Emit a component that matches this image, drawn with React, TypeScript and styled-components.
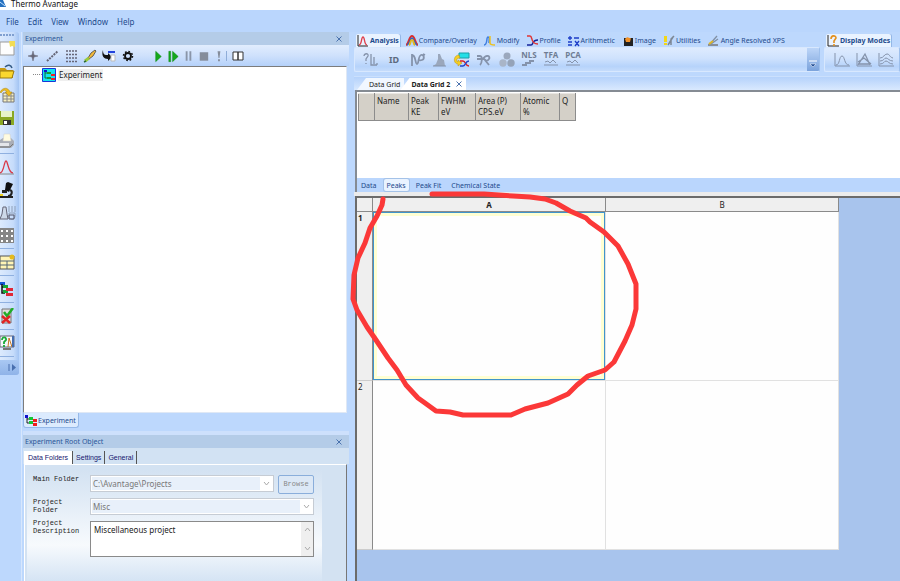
import React from "react";
import styled, { createGlobalStyle, css } from "styled-components";

const Global = createGlobalStyle`
  * { box-sizing: border-box; }
  body { margin: 0; background: #bdd8fd; overflow: hidden; }
  body, button, input, select, textarea { font-family: "Noto Sans", "Open Sans", sans-serif; font-size: 8px; line-height: 11px; color: #222; }
  button { background: none; border: 0; padding: 0; margin: 0; }
`;

const navy = "#1d4a8c";

const Shell = styled.div`
  height: 100vh;
  display: flex;
  flex-direction: column;
  background: #bdd8fd;
`;
const TitleBar = styled.header`
  flex: none;
  height: 10px;
  background: #fff;
  display: flex;
  align-items: flex-start;
  gap: 4px;
  svg { display: block; }
`;
const Title = styled.span`
  line-height: 8px;
  color: #111;
`;
const MenuBar = styled.nav`
  flex: none;
  height: 22px;
  display: flex;
  align-items: center;
  gap: 9px;
  padding-left: 6px;
  background: #bad6fd;
`;
const MenuItem = styled.button`
  font-size: 8px;
  color: ${navy};
`;
const Body = styled.div`
  flex: 1;
  min-height: 0;
  display: flex;
`;

const SideBar = styled.aside`
  flex: none;
  align-self: flex-start;
  width: 19px;
  display: flex;
  flex-direction: column;
  align-items: flex-start;
  background: linear-gradient(90deg, #dceafd, #c6dcfb 70%, #a3c4f3);
  border-radius: 0 3px 3px 0;
  overflow: hidden;
`;
const Grip = styled.div`
  width: 14px;
  height: 2px;
  margin: 2px 0 1px;
  background: repeating-linear-gradient(90deg, #7f9fd0 0 2px, transparent 2px 3px);
`;
const SideButton = styled.button<{ $tall?: boolean }>`
  width: 16px;
  height: ${(p) => (p.$tall ? 24 : 23)}px;
  display: flex;
  align-items: center;
`;
const SideRule = styled.div`
  width: 14px;
  height: 1px;
  margin: 1px 0;
  background: #8fb0e0;
`;
const Expander = styled.button`
  width: 19px;
  height: 15px;
  margin-top: 2px;
  display: flex;
  align-items: center;
  justify-content: flex-end;
  padding-right: 2px;
  background: linear-gradient(#a9c8f3, #8fb3e8);
`;

const Dock = styled.section`
  flex: none;
  width: 328px;
  margin-left: 2px;
  padding-left: 1px;
  border-left: 1px solid #d7e7fd;
  display: flex;
  flex-direction: column;
  min-height: 0;
`;
const DockHeader = styled.div`
  flex: none;
  height: 13px;
  display: flex;
  align-items: center;
  justify-content: space-between;
  padding: 0 6px 0 2px;
  font-size: 7px;
  color: #2a5699;
  background: #b4cce8;
`;
const CloseButton = styled.button`
  width: 8px;
  height: 8px;
  display: flex;
  align-items: center;
  justify-content: center;
`;
const DockTools = styled.div`
  flex: none;
  height: 21px;
  display: flex;
  align-items: center;
  background: linear-gradient(#e1edfe, #cfe1fc 50%, #b5d1fa);
`;
const ToolButton = styled.button<{ $w?: number }>`
  width: ${(p) => p.$w ?? 19}px;
  height: 18px;
  display: flex;
  align-items: center;
  justify-content: center;
`;
const ToolGap = styled.div`
  width: 14px;
`;
const ToolRule = styled.div`
  width: 1px;
  height: 10px;
  margin: 0 1px 0 0;
  background: #8fadd8;
`;
const Tree = styled.div`
  flex: none;
  height: 347px;
  margin-right: 2px;
  border: 1px solid #7c7c7c;
  border-right-color: #dfe8f5;
  border-bottom-color: #dfe8f5;
  background: #fff;
`;
const TreeItem = styled.div`
  display: flex;
  align-items: center;
  height: 15px;
  padding-left: 9px;
  &::before { content: ""; width: 9px; border-top: 1px dotted #888; }
  svg { display: block; }
`;
const TreeLabel = styled.span`
  margin-left: 2px;
  padding: 0 1px;
  line-height: 12px;
  background: #efefef;
`;
const DockTabs = styled.div`
  flex: none;
  height: 22px;
  border-bottom: 4px solid #cde0fc;
`;
const DockTab = styled.button`
  height: 15px;
  display: flex;
  align-items: center;
  gap: 1px;
  padding: 0 2px 0 1px;
  font-size: 7px;
  background: #dcebfe;
  border: 1px solid #96b9e8;
  border-top: 0;
  border-radius: 0 0 3px 3px;
  color: ${navy};
`;
const PropTabs = styled.div`
  flex: none;
  display: flex;
  align-items: flex-end;
  height: 16px;
  padding-left: 1px;
  background: #d2e2f3;
`;
const PropTab = styled.button<{ $active?: boolean }>`
  height: 13px;
  padding: 0 3px;
  font-family: "Liberation Sans", Arial, sans-serif;
  font-size: 7px;
  color: #16166e;
  border-right: 1px solid #555;
  ${(p) => p.$active && css`background: #fff; padding: 0 4px;`}
`;
const PropPanel = styled.div`
  flex: 1;
  margin: 0 2px 0 1px;
  padding: 5px 24px 0 2px;
  border-right: 1px solid #777;
  border-left: 1px solid #fff;
  border-top: 1px solid #fff;
  background: #d3e2f2;
`;
const Form = styled.div`
  height: 100%;
  padding: 5px 8px 0 6px;
  display: grid;
  grid-template-columns: 57px 1fr;
  grid-auto-rows: min-content;
  row-gap: 4px;
  background: linear-gradient(#d3e2f2, #f7fafd 75px, #d5e4f4);
`;
const FormLabel = styled.label`
  font-family: "Liberation Mono", monospace;
  font-size: 7px;
  line-height: 8px;
  color: #222;
`;
const FieldLine = styled.div`
  display: flex;
  gap: 4px;
`;
const SelectBox = styled.div`
  position: relative;
  flex: 1;
  height: 17px;
  border: 1px solid #c6ccd4;
  background: #fff;
  padding: 1px;
  svg { position: absolute; right: 3px; top: 5px; pointer-events: none; }
`;
const Select = styled.select`
  appearance: none;
  display: block;
  width: calc(100% - 12px);
  height: 13px;
  border: 0;
  padding: 0 1px;
  background: #e8f0fa;
  color: #777;
  opacity: 1;
`;
const Browse = styled.button`
  width: 36px;
  height: 19px;
  border: 1px solid #8aaedb;
  border-radius: 2px;
  font-family: "Liberation Mono", monospace;
  font-size: 7px;
  color: #888;
  background: #dce8f6;
`;
const MemoBox = styled.div`
  display: flex;
  height: 36px;
  margin-top: 2px;
  border: 1px solid #8a8a8a;
  background: #fff;
`;
const Memo = styled.textarea`
  flex: 1;
  min-width: 0;
  border: 0;
  resize: none;
  padding: 2px 3px;
  overflow: hidden;
  background: transparent;
`;
const MemoScroll = styled.div`
  width: 12px;
  display: flex;
  flex-direction: column;
  justify-content: space-between;
  align-items: center;
  padding: 5px 0;
  background: #efefef;
`;

const Main = styled.main`
  flex: 1;
  min-width: 0;
  margin-left: 5px;
  display: flex;
  flex-direction: column;
`;
const Ribbon = styled.div`
  flex: none;
  display: flex;
  gap: 4px;
  padding-top: 2px;
`;
const RibbonGroup = styled.div<{ $fixed?: boolean }>`
  ${(p) => (p.$fixed ? css`flex: none; width: 76px;` : css`flex: 1; min-width: 0;`)}
`;
const RibbonTabs = styled.div`
  height: 13px;
  display: flex;
  gap: 5px;
  padding-left: 2px;
`;
const RibbonTab = styled.button<{ $active?: boolean }>`
  flex: none;
  height: 13px;
  display: flex;
  align-items: center;
  gap: 1px;
  padding: 0 1px;
  font-size: 7px;
  color: ${navy};
  white-space: nowrap;
  ${(p) => p.$active && css`
    font-weight: bold;
    background: #eaf3ff;
    border-radius: 2px 2px 0 0;
    box-shadow: 1px 0 0 #94b7e6;
  `}
`;
const RibbonTools = styled.div`
  height: 25px;
  display: flex;
  align-items: center;
  padding-left: 5px;
  border: 1px solid #d8e8fe;
  border-right-color: #9dbfec;
  border-radius: 2px;
  background: linear-gradient(#deebfe, #cfe2fd 45%, #b6d3fb 80%, #c5dcfc);
  overflow: hidden;
`;
const ToolText = styled.span`
  font-size: 8px;
  line-height: 9px;
  font-weight: bold;
  color: #6f7d94;
`;
const ToolStack = styled.button`
  width: 22px;
  height: 20px;
  display: flex;
  flex-direction: column;
  align-items: center;
`;
const IdText = styled.span`
  font-size: 9px;
  font-weight: bold;
  color: #5d6a80;
`;
const Overflow = styled.button`
  width: 12px;
  align-self: stretch;
  margin-left: auto;
  display: flex;
  justify-content: center;
  align-items: flex-end;
  padding-bottom: 3px;
  background: linear-gradient(#bcd5f8, #7ba3dc);
`;
const DocTabs = styled.div`
  flex: none;
  height: 14px;
  margin-top: 4px;
  display: flex;
  align-items: flex-end;
  padding-left: 3px;
  background: linear-gradient(#b5d2fb, #d9e9fe);
  border-top: 1px solid #cbe0fd;
`;
const DocTab = styled.button<{ $active?: boolean }>`
  height: 12px;
  display: flex;
  align-items: center;
  gap: 5px;
  font-size: 7px;
  padding: 0 4px 0 12px;
  color: #222;
  background: #f1f7ff;
  clip-path: polygon(9px 0, 100% 0, 100% 100%, 0 100%);
  ${(p) => p.$active && css`
    margin-left: -4px;
    padding: 0 3px 0 11px;
    font-weight: bold;
    background: #fff;
  `}
`;
const GridPane = styled.div`
  flex: none;
  margin-left: 1px;
  height: 102px;
  display: flex;
  flex-direction: column;
  border-left: 2px solid #858b93;
  border-top: 2px solid #858b93;
  background: #fff;
`;
const GridScroll = styled.div`
  flex: 1;
  padding: 1px 0 0 1px;
`;
const PeakTable = styled.table`
  border-collapse: collapse;
  table-layout: fixed;
  width: 217px;
  background: #d4d0c8;
  th {
    height: 27px;
    padding: 1px 0 0 2px;
    border: 1px solid #8c8c8c;
    border-top-color: #e8e6e2;
    font-weight: normal;
    text-align: left;
    vertical-align: top;
    white-space: pre-line;
  }
`;
const SheetTabs = styled.div`
  flex: none;
  height: 14px;
  display: flex;
  align-items: center;
  gap: 4px;
  padding-left: 1px;
  background: #bad6fd;
`;
const SheetTab = styled.button<{ $active?: boolean }>`
  height: 12px;
  padding: 0 3px;
  font-size: 7px;
  color: ${navy};
  ${(p) => p.$active && css`
    background: #eaf3ff;
    box-shadow: 0 0 0 1px #a4c2e8;
    border-radius: 2px;
  `}
`;
const DisplayPane = styled.div`
  position: relative;
  flex: 1;
  min-height: 0;
  margin-left: 1px;
  padding-right: 61px;
  border-left: 2px solid #6b6b6b;
  border-top: 2px solid #6b6b6b;
  background: #a8c4ed;
`;
const PaneGap = styled.div`
  flex: none;
  height: 4px;
  background: #ececec;
`;
const DisplayTable = styled.table`
  width: 100%;
  table-layout: fixed;
  border-collapse: separate;
  border-spacing: 0;
  background: #fefefe;
  th {
    background: #efefef;
    border-right: 1px solid #8a8a8a;
    border-bottom: 1px solid #8a8a8a;
    font-weight: normal;
    padding: 0;
    vertical-align: top;
  }
  thead th { height: 14px; line-height: 13px; }
  tbody th { height: 169px; text-align: left; padding-left: 1px; border-bottom-color: #ccc; }
  td { border-right: 1px solid #e1e1e1; border-bottom: 1px solid #e1e1e1; padding: 0; }
  td.selected { box-shadow: inset 0 0 0 1px #3f94cc, inset 0 0 0 4px #ffffd2; }
  th.current { font-weight: bold; }
`;
const Scribble = styled.svg`
  position: absolute;
  left: -7px;
  top: -8px;
  pointer-events: none;
`;

type G = { w?: number; h?: number; children: React.ReactNode };
const Icon = ({ w = 16, h = 16, children }: G) => (
  <svg width={w} height={h} viewBox={`0 0 ${w} ${h}`} fill="none" aria-hidden="true">{children}</svg>
);
const Cross = () => (
  <Icon w={6} h={6}><path d="M.5 .5l5 5M5.500 .5l-5 5" stroke="#4a72ae" /></Icon>
);
const Chevron = ({ up }: { up?: boolean }) => (
  <Icon w={7} h={5}><path d={up ? "M1 4l2.500-3L6 4" : "M1 1l2.500 3L6 1"} stroke="#aaa" /></Icon>
);
const TreeIcon = () => (
  <Icon w={12} h={11}>
    <path d="M2 2v6h3M2 4h4" stroke="#222" />
    <path d="M0 0h3v3H0z" fill="#11c" />
    <path d="M4 2h4v3H4zM4 6h4v3H4z" fill="#15c735" />
    <path d="M8 4h4v3H8zM8 8h4v3H8z" fill="#ee1c1c" />
  </Icon>
);

const sideTop: [string, React.ReactNode][] = [
  ["New", <><path d="M0 1h14v13H0z" fill="#fdfdfd" stroke="#999" /><path d="M9 0h6v6l-3-1-2 1z" fill="#f2dc55" /></>],
  ["Open", <><path d="M0 4h5l2 2h6v8H0z" fill="#c79a12" /><path d="M0 14V7h14l-2 7z" fill="#fbd72e" stroke="#9a7a10" /><path d="M5 3c3-3 6-2 7 1" stroke="#345b86" strokeWidth="1.500" /></>],
  ["Copy", <><path d="M3 6h11v9H3z" fill="#f7efc0" stroke="#777" /><path d="M3 9h11M3 12h11M7 6v9M11 6v9" stroke="#888" /><path d="M0 5c3-5 8-5 10 0l2 0-3 4-4-4h2C5 2 3 3 1 6z" fill="#eebc20" stroke="#a98412" strokeWidth=".5" /></>],
  ["Save", <><path d="M0 1h14v14H0z" fill="#8aa823" /><path d="M1 1h11v6H1z" fill="#e7f3c8" /><path d="M3 10h8v5H3z" fill="#333" /><path d="M4 11h3v3H4z" fill="#fff" /></>],
  ["Print", <><path d="M0 7l3-2h8l3 3v4l-3 3H0z" fill="#a9adb6" /><path d="M4 1h6l1 7H3z" fill="#fffbe0" stroke="#ccc" strokeWidth=".5" /><path d="M0 10h9v3H0z" fill="#e4e6ea" /><path d="M0 14h10l3-3" stroke="#777" /></>],
];
const sideMid: [string, React.ReactNode][] = [
  ["Peak", <><path d="M0 14c4 0 4-12 6-12s2 12 7 12" stroke="#d93a4a" strokeWidth="1.300" /><path d="M0 15h14" stroke="#888" /></>],
  ["Microscope", <><path d="M6 1l2-1 5 2-4 8-4-2z" fill="#111" /><path d="M10 8c3 1 2 6-2 6" stroke="#222" strokeWidth="2" /><path d="M0 14h13v2H0z" fill="#222" /><path d="M0 12h3v2H0z" fill="#eed21d" /><path d="M2 8h5v3H2z" fill="#222" /></>],
  ["Sample", <><path d="M0 14l2-5 1-7h3l1 7 1 5z" fill="#cdd8e8" stroke="#667" /><path d="M9 8h6v4c-2 3-4 3-6 0zM9 1v6M12 1v6M15 1v6" stroke="#8fa0b8" /><path d="M9 10h5v4H9z" stroke="#556" /></>],
  ["Array", <><path d="M0 0h14v15H0z" fill="#858585" /><path d="M1 3h12M1 8h12M1 13h12" stroke="#fff" strokeWidth="2" strokeDasharray="2 3" /></>],
];
const sideLow: [string, React.ReactNode][] = [
  ["Table", <><path d="M0 2h14v13H0z" fill="#fff4b5" stroke="#555" /><path d="M0 7h14M0 11h14M7 7v8" stroke="#567" /><circle cx="12" cy="3" r="2.500" fill="#e5ba1c" /></>],
  ["Tree", <><path d="M0 1h5v3H0z" fill="#1557d5" /><path d="M2 3v9h3M2 6h3" stroke="#111" strokeWidth="1.500" /><path d="M3 4h5v3H3zM3 9h5v3H3z" fill="#16a834" /><path d="M6 7h7v3H6zM6 12h7v3H6z" fill="#e02736" /></>],
  ["Validate", <><path d="M2 1h9v14H2z" fill="#ddd" stroke="#777" /><path d="M4 4l3 4 6-8" stroke="#20ad26" strokeWidth="2.500" /><path d="M2 8l8 7M10 8l-8 7" stroke="#df2424" strokeWidth="2.500" /></>],
  ["Query", <><path d="M0 1h14v11H0z" fill="#f4f7fb" stroke="#667" /><path d="M2 5c0-4 5-3 4 0L4 7v2M4 10v2" stroke="#18aa38" strokeWidth="1.800" /><path d="M8 12l1-9 3 9" stroke="#c57822" /><path d="M13 1v11" stroke="#446db0" strokeWidth="2" /><path d="M3 14h8" stroke="#777" strokeWidth="2" /></>],
];

const g = "#8593ab";
const pointTools: [string, React.ReactNode][] = [
  ["Point", <path d="M8 3l1 4 4 1-4 1-1 4-1-4-4-1 4-1z" fill="#667" stroke="#667" strokeWidth=".5" />],
  ["Line", <path d="M3 13L14 3" stroke="#667" strokeWidth="2" strokeDasharray="2 1" />],
  ["Grid", <path d="M3 3h11M3 6.500h11M3 10h11M3 13.500h11" stroke="#667" strokeWidth="1.500" strokeDasharray="2 1" />],
  ["Probe", <><path d="M6 10l3-5 4-3 1 1-3 5-4 3z" fill="#f3b93a" stroke="#444" strokeWidth=".8" /><path d="M3 13l4-3" stroke="#9aca3a" strokeWidth="3" /><path d="M2 14l2-1" stroke="#2c6a3a" strokeWidth="1.500" /></>],
  ["Connect", <><path d="M2 2c0 5 2 5 5 5l0-2 4 4-4 4v-2C3 11 0 8 2 2z" fill="#111" /><path d="M7 4h7" stroke="#2443dd" strokeWidth="2" /><path d="M10 7h4v6h-4z" fill="#fff" stroke="#bbb" /></>],
  ["Settings", <><circle cx="8" cy="8" r="3" stroke="#111" strokeWidth="1.800" /><circle cx="8" cy="8" r="4.500" stroke="#111" strokeWidth="1.500" strokeDasharray="1.700 1.800" /></>],
];
const runTools: [string, React.ReactNode][] = [
  ["Play", <path d="M5 3l6 5.500-6 5.500z" fill="#14a81b" stroke="#0c8513" strokeWidth=".5" />],
  ["Step", <path d="M3 3h2v11H3zM7 3l6 5.500L7 14z" fill="#14a81b" stroke="#0c8513" strokeWidth=".5" />],
  ["Pause", <path d="M5 3h2v10H5zM9 3h2v10H9z" fill="#8a95a8" />],
  ["Stop", <path d="M4 4h9v9H4z" fill="#858d9b" />],
  ["Alert", <path d="M7 3h3l-1 7H8zM7.500 11.500h2v2h-2z" fill="#858d9b" />],
];

const ribbonTabs: [string, React.ReactNode][] = [
  ["Analysis", <><path d="M1 0v11h10" stroke="#222" /><path d="M2 10c3 0 2-8 4-8s1 8 4 8" stroke="#df3e4a" strokeWidth="1.300" /></>],
  ["Compare/Overlay", <><path d="M0 10C3 9 3 1 6 1s3 8 6 9" stroke="#d82f2f" strokeWidth="2" /><path d="M1 10C4 9 4 3 6 3s2 6 5 7" stroke="#2864c8" strokeWidth="1.500" /><path d="M3 10c2-1 1-5 3-5s1 4 3 5" stroke="#e2b81c" strokeWidth="2" /></>],
  ["Modify", <><path d="M0 10C4 10 2 2 4 2s1 3 1 6" stroke="#3f7fe0" strokeWidth="1.500" /><path d="M6 1v7c0 2 3 2 5 2" stroke="#ecc11f" strokeWidth="1.500" /></>],
  ["Profile", <><path d="M1 10h4c3 0 0-5 7-5" stroke="#16239a" strokeWidth="1.500" /><path d="M1 1h3c3 0 0 8 8 8" stroke="#df3434" strokeWidth="1.500" /></>],
  ["Arithmetic", <path d="M0 3h4M2 1v4M6 3h5M0 7h4M0 10h4M7 6l4 5M11 6l-4 5" stroke="#1c3cc7" strokeWidth="1.300" />],
  ["Image", <><path d="M2 3h9v8H2z" fill="#222" /><path d="M3 4c3-4 4 0 6-1l-1 4H4z" fill="#f09028" /></>],
  ["Utilities", <><path d="M1 1h3v6H1zM1 8h3v2H1z" fill="#f2d718" /><path d="M5 10l5-8M8 10V4l3-3" stroke="#7d8794" strokeWidth="1.500" /></>],
  ["Angle Resolved XPS", <><path d="M0 10h10" stroke="#777" strokeWidth="1.500" /><path d="M2 9L9 1M3 9l7-5" stroke="#8190a4" strokeWidth="1.300" /><path d="M1 9l4-3" stroke="#ddb62b" strokeWidth="2" /></>],
];

export default function App() {
  return (
    <>
      <Global />
      <Shell>
        <TitleBar>
          <Icon w={7} h={8}><path d="M0 0h3l3 7H0z" fill="#2570bf" /><path d="M0 2l5 4" stroke="#bfe1ff" /></Icon>
          <Title>Thermo Avantage</Title>
        </TitleBar>
        <MenuBar>
          {["File", "Edit", "View", "Window", "Help"].map((m) => <MenuItem key={m}>{m}</MenuItem>)}
        </MenuBar>
        <Body>
          <SideBar>
            <Grip />
            {sideTop.map(([n, i]) => <SideButton key={n} aria-label={n}><Icon>{i}</Icon></SideButton>)}
            <SideRule />
            {sideMid.map(([n, i]) => <SideButton key={n} aria-label={n}><Icon>{i}</Icon></SideButton>)}
            {sideLow.map(([n, i]) => (
              <React.Fragment key={n}>
                <SideRule />
                <SideButton $tall aria-label={n}><Icon>{i}</Icon></SideButton>
              </React.Fragment>
            ))}
            <SideRule />
            <Expander aria-label="More tools"><Icon w={9} h={9}><path d="M1 1v7" stroke="#486fae" /><path d="M4 1l4 3.500L4 8z" fill="#486fae" /></Icon></Expander>
          </SideBar>

          <Dock>
            <DockHeader>Experiment<CloseButton aria-label="Close experiment"><Cross /></CloseButton></DockHeader>
            <DockTools>
              {pointTools.map(([n, i]) => <ToolButton key={n} aria-label={n}><Icon>{i}</Icon></ToolButton>)}
              <ToolGap />
              {runTools.map(([n, i]) => <ToolButton key={n} $w={15} aria-label={n}><Icon>{i}</Icon></ToolButton>)}
              <ToolRule />
              <ToolButton aria-label="Log"><Icon><path d="M3 4h5v8H3zM8 4h5v8H8z" fill="#fff" stroke="#333" /></Icon></ToolButton>
            </DockTools>
            <Tree>
              <TreeItem>
                <Icon w={14} h={14}><path d="M.5 .5h13v13H.5z" fill="#14e4ee" stroke="#1a35d8" /><path d="M3 3v7h4M3 5h5" stroke="#164" /><path d="M2 2h3v2H2z" fill="#11c" /><path d="M5 4h4v2H5zM5 9h4v2H5z" fill="#159b34" /><path d="M9 6h4v2H9zM9 10h4v2H9z" fill="#e22" /></Icon>
                <TreeLabel>Experiment</TreeLabel>
              </TreeItem>
            </Tree>
            <DockTabs><DockTab><TreeIcon />Experiment</DockTab></DockTabs>
            <DockHeader>Experiment Root Object<CloseButton aria-label="Close properties"><Cross /></CloseButton></DockHeader>
            <PropTabs>
              <PropTab $active>Data Folders</PropTab>
              <PropTab>Settings</PropTab>
              <PropTab>General</PropTab>
            </PropTabs>
            <PropPanel>
              <Form>
                <FormLabel htmlFor="main">Main Folder</FormLabel>
                <FieldLine>
                  <SelectBox><Select id="main" disabled><option>C:\Avantage\Projects</option></Select><Chevron /></SelectBox>
                  <Browse disabled>Browse</Browse>
                </FieldLine>
                <FormLabel htmlFor="folder">Project<br />Folder</FormLabel>
                <SelectBox><Select id="folder" disabled><option>Misc</option></Select><Chevron /></SelectBox>
                <FormLabel htmlFor="desc">Project<br />Description</FormLabel>
                <MemoBox>
                  <Memo id="desc" defaultValue="Miscellaneous project" />
                  <MemoScroll><Chevron up /><Chevron /></MemoScroll>
                </MemoBox>
              </Form>
            </PropPanel>
          </Dock>

          <Main>
            <Ribbon>
              <RibbonGroup>
                <RibbonTabs>
                  {ribbonTabs.map(([n, i], k) => <RibbonTab key={n} $active={k === 0}><Icon w={12} h={12}>{i}</Icon>{n}</RibbonTab>)}
                </RibbonTabs>
                <RibbonTools>
                  <ToolButton $w={22} aria-label="Identify"><Icon><path d="M1 4c0-3 5-3 4 0L3 7v2M3 11v1M8 2v11h6M11 5v7M14 11v2" stroke={g} strokeWidth="1.300" /></Icon></ToolButton>
                  <ToolButton $w={24}><IdText>ID</IdText></ToolButton>
                  <ToolButton $w={23} aria-label="Background"><Icon><path d="M2 2v12M2 3c4 0 3 9 5 9S8 4 11 3s4 4 1 5-2 0-3 0M13 2l2 1" stroke={g} strokeWidth="1.800" /></Icon></ToolButton>
                  <ToolButton $w={21} aria-label="Fit"><Icon><path d="M1 14l3-2 2-5V2h2l2 5 2 1 1 6z" fill="#9aa7bc" /><path d="M1 14h13" stroke={g} /></Icon></ToolButton>
                  <ToolButton $w={23} aria-label="Process"><Icon w={17} h={16}><path d="M6 1h10v5H6z" fill="#23dfe7" stroke="#189eaa" /><path d="M6 3C0 3 0 12 5 12v2l4-3-4-3v2C3 9 3 6 7 6z" fill="#f5cf20" stroke="#bb8e15" strokeWidth=".5" /><path d="M7 9h3c3 0 2 5 6 5" stroke="#d22" strokeWidth="1.500" /><path d="M7 14h3c3 0 2-5 6-5" stroke="#24c" strokeWidth="1.500" /></Icon></ToolButton>
                  <ToolButton $w={22} aria-label="Smooth"><Icon><path d="M1 4h3c3 0 2 7 0 9M1 7h6c3-5 8-3 6 0s-4 1-5 0l5 6" stroke={g} strokeWidth="1.800" /></Icon></ToolButton>
                  <ToolButton $w={23} aria-label="Spheres"><Icon><circle cx="8" cy="4" r="3.500" fill="#9ba8bd" /><circle cx="4" cy="11" r="3.700" fill="#a9b5c8" /><circle cx="12" cy="11" r="3.700" fill="#95a3b8" /></Icon></ToolButton>
                  <ToolStack><ToolText>NLS</ToolText><Icon h={7}><path d="M1 6h4V4h4V2h4" stroke={g} strokeWidth="2" /></Icon></ToolStack>
                  <ToolStack><ToolText>TFA</ToolText><Icon h={7}><path d="M1 6h14M2 3l3-1 2 2 3-3 3 3" stroke={g} /></Icon></ToolStack>
                  <ToolStack><ToolText>PCA</ToolText><Icon h={7}><path d="M1 6h14M2 3l3-1 2 2 3-3 3 3" stroke={g} /></Icon></ToolStack>
                  <Overflow aria-label="More"><Icon w={8} h={8}><path d="M0 1h8" stroke="#fff" /><path d="M1 4h6L4 7z" fill="#245097" stroke="#fff" strokeWidth=".5" /></Icon></Overflow>
                </RibbonTools>
              </RibbonGroup>
              <RibbonGroup $fixed>
                <RibbonTabs>
                  <RibbonTab $active><Icon w={12} h={12}><path d="M1 0v11h11" stroke="#222" /><path d="M4 4c0-4 5-4 5-1L7 6v2M7 9v2" stroke="#e3901f" strokeWidth="1.600" /></Icon>Display Modes</RibbonTab>
                </RibbonTabs>
                <RibbonTools>
                  <ToolButton $w={23} aria-label="Single"><Icon><path d="M1 1v13h15" stroke={g} /><path d="M2 13c4 0 3-9 6-9s2 9 7 9" stroke={g} /></Icon></ToolButton>
                  <ToolButton $w={22} aria-label="Overlay"><Icon><path d="M1 1v13h15" stroke={g} /><path d="M2 13L9 2l5 11M2 10l6-4 7 6M2 12h12" stroke={g} strokeWidth="1.300" /></Icon></ToolButton>
                  <ToolButton $w={22} aria-label="Stack"><Icon><path d="M1 1v13h15" stroke={g} /><path d="M2 6c4 0 4-4 7-4s2 3 6 4M2 9c4 0 4-3 6-3s3 3 7 3M2 12c4 0 4-3 6-3s3 3 7 3" stroke={g} /></Icon></ToolButton>
                </RibbonTools>
              </RibbonGroup>
            </Ribbon>

            <DocTabs>
              <DocTab>Data Grid</DocTab>
              <DocTab $active as="div">Data Grid 2<CloseButton aria-label="Close tab"><Cross /></CloseButton></DocTab>
            </DocTabs>
            <GridPane>
              <GridScroll>
                <PeakTable>
                  <colgroup>{[16, 34, 30, 37, 45, 39, 16].map((w, i) => <col key={i} width={w} />)}</colgroup>
                  <thead><tr>{["", "Name", "Peak\nKE", "FWHM\neV", "Area (P)\nCPS.eV", "Atomic\n%", "Q"].map((t, i) => <th key={i}>{t}</th>)}</tr></thead>
                </PeakTable>
              </GridScroll>
              <SheetTabs>
                <SheetTab>Data</SheetTab>
                <SheetTab $active>Peaks</SheetTab>
                <SheetTab>Peak Fit</SheetTab>
                <SheetTab>Chemical State</SheetTab>
              </SheetTabs>
            </GridPane>
            <PaneGap />
            <DisplayPane>
              <DisplayTable>
                <colgroup><col width={16} /><col /><col /></colgroup>
                <thead><tr><th /><th className="current">A</th><th>B</th></tr></thead>
                <tbody>
                  <tr><th className="current">1</th><td className="selected" /><td /></tr>
                  <tr><th>2</th><td /><td /></tr>
                </tbody>
              </DisplayTable>
              <Scribble width="290" height="230" viewBox="350 190 290 230" fill="none" aria-hidden="true">
                <path
                  d="M383 199L382 205L377 216L370 228L365 243L358 258L354 275L353 299L357 310L367 327L376 340L388 358L397 370L406 385L418 398L425 403L436 411L450 412L463 415H511L525 409L548 403L568 394L577 385L588 376L605 370L614 362L625 341L632 325L636 309V284L628 264L618 246L604 232L590 222L586 218L570 211L556 203L545 199L530 197L513 196L484 194H432"
                  stroke="#fb3838" strokeWidth="5" strokeLinecap="round" strokeLinejoin="round"
                />
              </Scribble>
            </DisplayPane>
          </Main>
        </Body>
      </Shell>
    </>
  );
}
